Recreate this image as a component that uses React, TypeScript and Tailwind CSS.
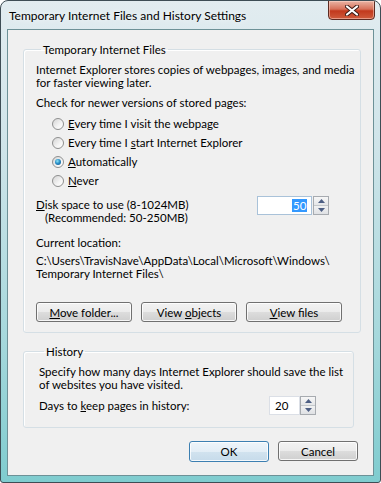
import React from 'react';

const font = { fontFamily: 'Lato, "Liberation Sans", sans-serif' };

const Radio = ({ checked, children }: { checked?: boolean; children: React.ReactNode }) => (
  <div className="flex h-[19px] items-center">
    <div className="flex h-[12px] w-[12px] items-center justify-center rounded-full border border-[#8e8f8f] bg-[linear-gradient(135deg,#d4d4d4_0%,#f4f4f4_60%,#ffffff_100%)]">
      {checked && (
        <div className="h-[6px] w-[6px] rounded-full bg-[radial-gradient(circle_at_40%_35%,#8fe6f6_0%,#2a8fc8_45%,#0f4f86_100%)]" />
      )}
    </div>
    <span className="ml-[4px]">{children}</span>
  </div>
);

const Button = ({ children, w, primary }: { children: React.ReactNode; w: string; primary?: boolean }) => (
  <div
    className={`flex items-center justify-center rounded-[3px] border shadow-[inset_0_0_0_1px_rgba(255,255,255,0.8)] ${w} ${
      primary
        ? 'h-[21px] border-[#3c7fb1] bg-[linear-gradient(#eef5fa_0%,#e3eef6_50%,#d2e3ef_50%,#c6dbea_100%)]'
        : 'h-[20px] border-[#707070] bg-[linear-gradient(#f2f2f2_0%,#ebebeb_50%,#dddddd_50%,#cfcfcf_100%)]'
    }`}
  >
    <span>{children}</span>
  </div>
);

const SpinButtons = () => (
  <div className="flex h-[19px] w-[16px] flex-col border border-[#a7abb0] bg-[#f4f4f4]">
    <div className="flex flex-1 items-center justify-center border-b border-[#c4c8cc] bg-[linear-gradient(#f7f7f7,#e4e6e8)]">
      <svg width="7" height="4" viewBox="0 0 7 4">
        <path d="M0 4 L3.5 0 L7 4 Z" fill="#4d5f84" />
      </svg>
    </div>
    <div className="flex flex-1 items-center justify-center bg-[linear-gradient(#f1f2f3,#dfe1e4)]">
      <svg width="7" height="4" viewBox="0 0 7 4">
        <path d="M0 0 L3.5 4 L7 0 Z" fill="#4d5f84" />
      </svg>
    </div>
  </div>
);

export default function App() {
  return (
    <div
      style={font}
      className="relative flex h-[483px] w-[381px] flex-col overflow-hidden whitespace-nowrap rounded-t-[8px] rounded-b-[3px] border border-[#3e4d55] bg-[linear-gradient(#e2ecf0_0%,#cfe4e9_30%,#a6d8dc_70%,#7fcccf_100%)] px-[6px] pb-[6px] text-[11.5px] leading-[13px] text-black"
    >
      {/* title bar */}
      <div className="flex h-[28px] shrink-0 items-center pl-[2px] text-[12px] [text-shadow:0_0_6px_#ffffff]">
        Temporary Internet Files and History Settings
      </div>
      <div className="absolute right-[5px] top-[-1px] flex h-[20px] w-[47px] items-center justify-center rounded-b-[4px] border border-[#5c2b22] bg-[linear-gradient(#eab4a4_0%,#d7715a_45%,#c2391d_55%,#cf5b3c_100%)] shadow-[inset_0_0_0_1px_rgba(255,220,210,0.5)]">
        <svg width="14" height="11" viewBox="0 0 14 11">
          <path d="M2 1.5 L12 9.5 M12 1.5 L2 9.5" stroke="#3a1a14" strokeWidth="4" strokeLinecap="round" />
          <path d="M2 1.5 L12 9.5 M12 1.5 L2 9.5" stroke="#ffffff" strokeWidth="2.2" strokeLinecap="round" />
        </svg>
      </div>

      {/* client area */}
      <div className="flex h-[447px] shrink-0 flex-col border border-[#6d9197] bg-[#f0f0f0] pt-[13px]">
        <fieldset className="mx-[15px] rounded-[3px] border border-[#d5dfe5] pb-[10px] pl-[12px] pr-[6px] shadow-[inset_1px_1px_0_#ffffff]">
          <legend className="ml-[5px] px-[2px] leading-[13px]">Temporary Internet Files</legend>
          <p className="mt-[7px]">
            Internet Explorer stores copies of webpages, images, and media
            <br />
            for faster viewing later.
          </p>
          <p className="mt-[7px]">Check for newer versions of stored pages:</p>
          <div className="mt-[5px] ml-[16px] flex flex-col">
            <Radio>
              <u>E</u>very time I visit the webpage
            </Radio>
            <Radio>
              Every time I <u>s</u>tart Internet Explorer
            </Radio>
            <Radio checked>
              <u>A</u>utomatically
            </Radio>
            <Radio>
              <u>N</u>ever
            </Radio>
          </div>
          <div className="mt-[7px] flex items-start justify-between">
            <div className="pt-[1px]">
              <div>
                <u>D</u>isk space to use (8-1024MB)
              </div>
              <div className="pl-[9px]">(Recommended: 50-250MB)</div>
            </div>
            <div className="mr-[25px] mt-[-1px] flex gap-[1px]">
              <div className="flex h-[19px] w-[55px] items-center justify-end border border-[#a9c2d9] bg-white pr-[4px]">
                <span className="bg-[#3399ff] px-[1px] leading-[13px] text-white">50</span>
              </div>
              <SpinButtons />
            </div>
          </div>
          <p className="mt-[12px]">Current location:</p>
          <p className="mt-[5px]">
            C:\Users\TravisNave\AppData\Local\Microsoft\Windows\
            <br />
            Temporary Internet Files\
          </p>
          <div className="mt-[22px] flex gap-[9px]">
            <Button w="w-[96px]">
              <u>M</u>ove folder...
            </Button>
            <Button w="w-[96px]">
              View <u>o</u>bjects
            </Button>
            <Button w="w-[96px]">
              <u>V</u>iew files
            </Button>
          </div>
        </fieldset>

        <fieldset className="ml-[15px] mr-[19px] mt-[12px] rounded-[3px] border border-[#d5dfe5] pb-[12px] pl-[15px] pr-[4px] shadow-[inset_1px_1px_0_#ffffff]">
          <legend className="ml-[5px] px-[2px] leading-[13px]">History</legend>
          <p className="mt-[7px]">
            Specify how many days Internet Explorer should save the list
            <br />
            of websites you have visited.
          </p>
          <div className="mt-[5px] flex items-center">
            <span className="w-[230px]">
              Days to <u>k</u>eep pages in history:
            </span>
            <div className="flex h-[19px] w-[31px] items-center border border-[#dbdfe6] bg-white pl-[5px]">20</div>
            <SpinButtons />
          </div>
        </fieldset>

        <div className="mt-[13px] flex justify-end gap-[9px] pr-[15px]">
          <Button w="w-[80px]" primary>
            OK
          </Button>
          <Button w="w-[80px]">Cancel</Button>
        </div>
      </div>
    </div>
  );
}
